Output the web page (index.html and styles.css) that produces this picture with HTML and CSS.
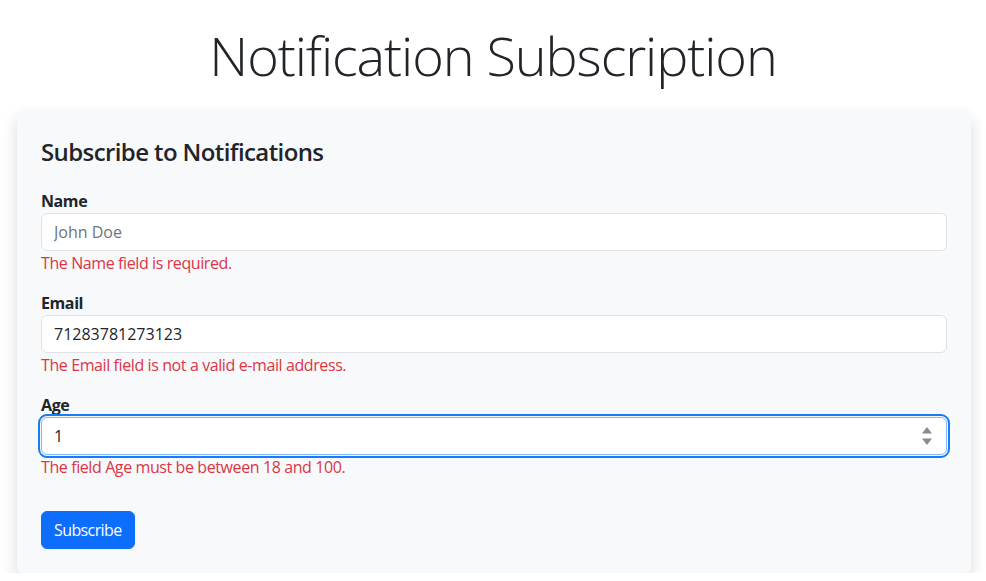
FILE: index.html
```html
<!DOCTYPE html>
<html lang="en">
<head>
<meta charset="utf-8">
<title>Notification Subscription</title>
<link rel="stylesheet" href="styles.css">
</head>
<body>
<h1 class="page-title">Notification Subscription</h1>
<div class="card">
  <h4 class="card-title">Subscribe to Notifications</h4>
  <form class="form">
    <div class="group">
      <label class="label" for="name">Name</label>
      <input class="control" id="name" type="text" placeholder="John Doe">
      <div class="error">The Name field is required.</div>
    </div>
    <div class="group">
      <label class="label" for="email">Email</label>
      <input class="control" id="email" type="text" value="71283781273123">
      <div class="error">The Email field is not a valid e-mail address.</div>
    </div>
    <div class="group">
      <label class="label" for="age">Age</label>
      <div class="control-wrap">
        <input class="control focused" id="age" type="text" value="1">
        <svg class="spin" width="12" height="22" viewBox="0 0 12 22" aria-hidden="true">
          <path d="M6 2 L11 8.5 L1 8.5 Z" fill="#8a8a8a"/>
          <path d="M1 13.5 L11 13.5 L6 20 Z" fill="#8a8a8a"/>
        </svg>
      </div>
      <div class="error">The field Age must be between 18 and 100.</div>
    </div>
    <div class="actions">
      <button class="btn" type="button">Subscribe</button>
    </div>
  </form>
</div>
</body>
</html>
```

FILE: styles.css
```css
* { box-sizing: border-box; }

body {
  margin: 0;
  background: #fff;
  color: #212529;
  font-family: "Open Sans", "Noto Sans", sans-serif;
  font-size: 16px;
  line-height: 1.5;
  letter-spacing: -0.4px;
}

.page-title {
  margin: 23px 0 22px;
  text-align: center;
  font-size: 54px;
  font-weight: 300;
  line-height: 1.2;
  letter-spacing: -1.1px;
  color: #212529;
}

.card {
  margin-left: 17px;
  width: 954px;
  padding: 24px;
  background: #f8f9fa;
  border-radius: 6px;
  box-shadow: 0 8px 16px rgba(0, 0, 0, 0.15);
}

.card-title {
  margin: 4px 0 22px;
  font-size: 24px;
  font-weight: 600;
  line-height: 1.2;
  letter-spacing: -0.6px;
}

.form { margin: 0; }

.group { margin-bottom: 16px; }

.label {
  display: block;
  font-weight: 700;
  line-height: 24px;
}

.control-wrap { position: relative; }

.control {
  display: block;
  width: 100%;
  height: 38px;
  padding: 6px 12px;
  font: inherit;
  letter-spacing: 0;
  color: #212529;
  background: #fff;
  border: 1px solid #dee2e6;
  border-radius: 6px;
  outline: none;
}

.control::placeholder { color: #6c757d; }

.control.focused {
  border-color: #86b7fe;
  outline: 2px solid #1a7cf5;
  outline-offset: 1px;
}

.spin {
  position: absolute;
  right: 14px;
  top: 8px;
}

.error {
  color: #dc3545;
  line-height: 24px;
}

.actions { padding-top: 16px; }

.btn {
  display: inline-block;
  height: 38px;
  padding: 6px 12px;
  font: inherit;
  letter-spacing: -0.6px;
  color: #fff;
  background: #0d6efd;
  border: 1px solid #0d6efd;
  border-radius: 6px;
}
```
